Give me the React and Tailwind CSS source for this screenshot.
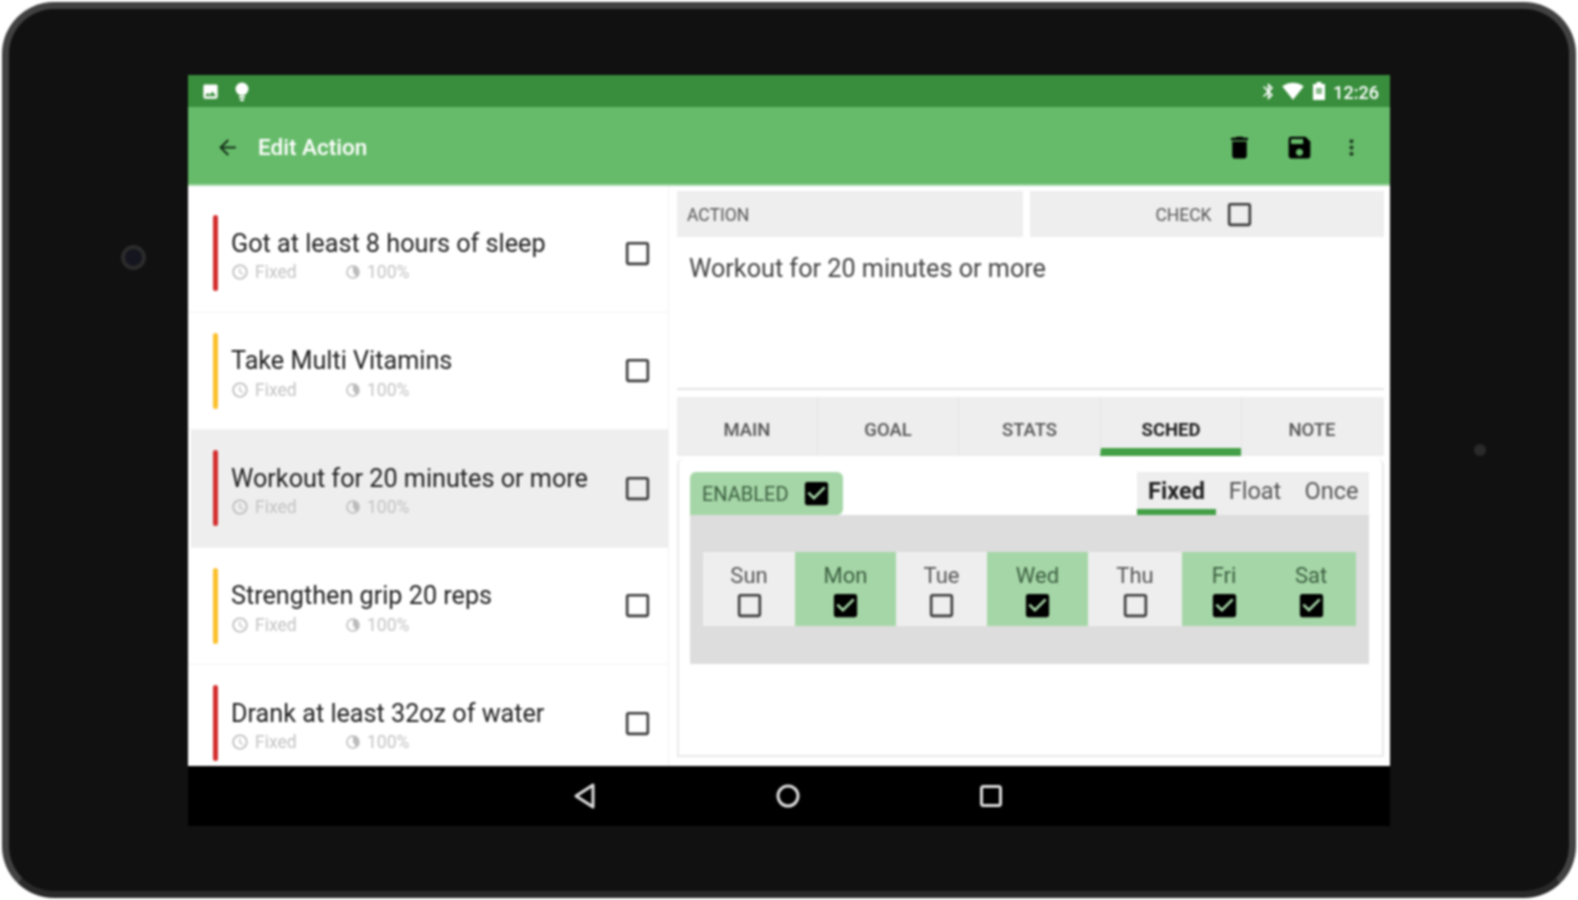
import React from 'react';
import {
  MdArrowBack,
  MdDelete,
  MdSave,
  MdMoreVert,
  MdBluetooth,
  MdSignalWifi4Bar,
  MdImage,
  MdCheckBox,
  MdCheckBoxOutlineBlank,
  MdAccessTime,
} from 'react-icons/md';

const actions = [
  { title: 'Got at least 8 hours of sleep', color: 'bg-[#d32f2f]' },
  { title: 'Take Multi Vitamins', color: 'bg-[#fbc02d]' },
  { title: 'Workout for 20 minutes or more', color: 'bg-[#d32f2f]', selected: true },
  { title: 'Strengthen grip 20 reps', color: 'bg-[#fbc02d]' },
  { title: 'Drank at least 32oz of water', color: 'bg-[#d32f2f]' },
];

const tabs = [
  { label: 'MAIN', width: 'w-[140px]' },
  { label: 'GOAL', width: 'w-[141px]' },
  { label: 'STATS', width: 'w-[142px]' },
  { label: 'SCHED', width: 'w-[141px]', active: true },
  { label: 'NOTE', width: 'w-[141px]' },
];

const days = [
  { label: 'Sun', width: 'w-[92px]' },
  { label: 'Mon', width: 'w-[101px]', on: true },
  { label: 'Tue', width: 'w-[91px]' },
  { label: 'Wed', width: 'w-[101px]', on: true },
  { label: 'Thu', width: 'w-[94px]' },
  { label: 'Fri', width: 'w-[84px]', on: true },
  { label: 'Sat', width: 'w-[90px]', on: true },
];

const Box = ({ checked, size = 31 }) =>
  checked ? (
    <MdCheckBox size={size} className="text-black shrink-0" />
  ) : (
    <MdCheckBoxOutlineBlank size={size} className="text-[#3a3a3a] shrink-0" />
  );

const PieIcon = () => (
  <svg width="16" height="16" viewBox="0 0 16 16" className="text-[#bbb]">
    <circle cx="8" cy="8" r="6" fill="none" stroke="currentColor" strokeWidth="1.5" />
    <path d="M8 2a6 6 0 0 1 3 11L8 8z" fill="currentColor" />
  </svg>
);

const ActionRow = ({ title, color, selected }) => (
  <div className={`h-[117.5px] shrink-0 flex items-center pr-[15px] border-b border-[#f3f3f3] ${selected ? 'bg-[#eeeeee] ml-[3px] pl-[22px]' : 'pl-[25px]'}`}>
    <div className={`w-[5px] h-[76px] rounded-sm shrink-0 ${color}`} />
    <div className="flex-1 pl-[13px] pt-[8px]">
      <div className="text-[25.2px] leading-[30px] text-[#222]">{title}</div>
      <div className="flex items-center h-[27px] text-[17.5px] text-[#c2c2c2]">
        <div className="flex items-center gap-[6px] w-[114px]">
          <MdAccessTime size={18} className="text-[#b5b5b5]" />
          <span>Fixed</span>
        </div>
        <div className="flex items-center gap-[6px]">
          <PieIcon />
          <span>100%</span>
        </div>
      </div>
    </div>
    <Box />
  </div>
);

const App = () => (
  <div className="w-[1578px] h-[900px] bg-white overflow-hidden [font-family:Roboto,'Liberation_Sans',sans-serif]">
    <div className="blur-[0.8px] relative w-[1574px] h-[896px] mt-[2px] ml-[2px] rounded-[52px] bg-[#111111] border-[7px] border-[#424242] border-b-[#2a2a2a] pl-[179px] pt-[66px]">
      {/* camera */}
      <div className="absolute left-[112px] top-[236px] w-[25px] h-[25px] rounded-full border-[4px] border-[#2c2c2c] bg-[#15151f]" />
      <div className="absolute left-[1465px] top-[435px] w-[12px] h-[12px] rounded-full bg-[#2a2a2a]" />

      <div className="w-[1202px] h-[751px] flex flex-col bg-black">
        {/* status bar */}
        <div className="h-[32px] shrink-0 bg-[#388e3c] flex items-center pl-[13px] pr-[11px] text-white">
          <MdImage size={19} />
          <svg width="16" height="20" viewBox="0 0 16 20" className="ml-[14px]" fill="currentColor">
            <circle cx="8" cy="8" r="6.5" />
            <rect x="5" y="15" width="6" height="2" />
            <rect x="6" y="18" width="4" height="2" />
          </svg>
          <div className="flex-1" />
          <MdBluetooth size={19} />
          <MdSignalWifi4Bar size={22} className="ml-[4px]" />
          <svg width="14" height="18" viewBox="0 0 14 18" className="ml-[8px]">
            <path d="M4.5 0h5v2H13v16H1V2h3.5z" fill="#fff" />
            <rect x="4" y="6" width="6" height="6" fill="#8bbd8e" />
          </svg>
          <span className="ml-[7px] text-[18px] font-medium pt-[2px]">12:26</span>
        </div>

        {/* app bar */}
        <div className="h-[79px] shrink-0 bg-[#66bb6a] flex items-center pl-[27px] pt-[3px] border-b-2 border-[#a5d6a7]">
          <MdArrowBack size={25} className="text-[#16331a]" />
          <span className="ml-[18px] text-[22.5px] font-medium text-white pt-[2px]">Edit Action</span>
          <div className="flex-1" />
          <MdDelete size={29} className="text-black" />
          <MdSave size={29} className="text-black ml-[31px]" />
          <MdMoreVert size={25} className="text-[#1f3d22] ml-[25px] mr-[26px]" />
        </div>

        <div className="flex-1 flex min-h-0 bg-white">
          {/* action list */}
          <div className="w-[481px] shrink-0 flex flex-col overflow-hidden pt-[9px] border-r border-[#f3f3f3]">
            {actions.map((a) => (
              <ActionRow key={a.title} {...a} />
            ))}
          </div>

          {/* detail */}
          <div className="w-[707px] ml-[8px] pt-[5px] flex flex-col">
            <div className="h-[46px] flex text-[17.5px] text-[#555]">
              <div className="w-[346px] bg-[#eeeeee] flex items-center pl-[10px] pt-[3px]">ACTION</div>
              <div className="w-[354px] ml-[7px] bg-[#eeeeee] flex items-center justify-center gap-[12px] pr-[4px] pt-[1px]">
                <span className="pt-[1px]">CHECK</span>
                <Box />
              </div>
            </div>
            <div className="h-[153px] border-b-2 border-[#e4e4e4] pl-[12px] pt-[17px] text-[25.2px] leading-[30px] text-[#444]">
              Workout for 20 minutes or more
            </div>

            <div className="h-[59px] mt-[7px] flex bg-[#eeeeee] text-[18.5px] font-medium text-[#555]">
              {tabs.map((t) => (
                <div
                  key={t.label}
                  className={`${t.width} flex items-center justify-center border-l border-[#e6e6e6] first:border-l-0 ${t.active ? 'font-bold text-[#222] border-b-[8px] border-b-[#43a047] pt-[17px]' : 'pt-[9px]'}`}
                >
                  {t.label}
                </div>
              ))}
            </div>

            <div className="h-[298px] mt-[3px] bg-white border-x-2 border-b-2 border-[#e9e9e9] rounded-t-md pl-[11px] pr-[13px] pt-[13px]">
              <div className="h-[43px] flex justify-between">
                <div className="w-[153px] bg-[#a5d6a7] rounded-t-md rounded-br-md flex items-center pl-[12px] gap-[12px] text-[20px] text-[#3c5f40]">
                  <span>ENABLED</span>
                  <Box checked />
                </div>
                <div className="w-[232px] h-[43px] flex bg-[#eeeeee] text-[23.5px] text-[#555]">
                  <div className="w-[79px] h-full flex items-center justify-center font-bold text-[#222] border-b-[6px] border-[#43a047] pt-[3px]">Fixed</div>
                  <div className="w-[78px] h-[37px] flex items-center justify-center pt-[3px]">Float</div>
                  <div className="w-[75px] h-[37px] flex items-center justify-center pt-[3px]">Once</div>
                </div>
              </div>

              <div className="h-[149px] bg-[#dddddd] pl-[13px] pt-[37px]">
                <div className="flex h-[74px]">
                  {days.map((d) => (
                    <div
                      key={d.label}
                      className={`${d.width} flex flex-col items-center pt-[9px] text-[22px] leading-[29px] ${d.on ? 'bg-[#a5d6a7] text-[#3c5f40]' : 'bg-[#eeeeee] text-[#555]'}`}
                    >
                      <span>{d.label}</span>
                      <Box checked={d.on} />
                    </div>
                  ))}
                </div>
              </div>
            </div>
          </div>
        </div>

        {/* nav bar */}
        <div className="h-[60px] shrink-0 bg-black flex items-center justify-center gap-[173px] pr-[2px]">
          <svg width="30" height="30" viewBox="0 0 30 30" fill="none" stroke="#ddd" strokeWidth="3">
            <path d="M23 4v22L6 15z" strokeLinejoin="round" />
          </svg>
          <svg width="30" height="30" viewBox="0 0 30 30" fill="none" stroke="#ddd" strokeWidth="3">
            <circle cx="15" cy="15" r="10" />
          </svg>
          <svg width="30" height="30" viewBox="0 0 30 30" fill="none" stroke="#ddd" strokeWidth="3">
            <rect x="5.5" y="5.5" width="19" height="19" rx="2" />
          </svg>
        </div>
      </div>
    </div>
  </div>
);

export default App;
